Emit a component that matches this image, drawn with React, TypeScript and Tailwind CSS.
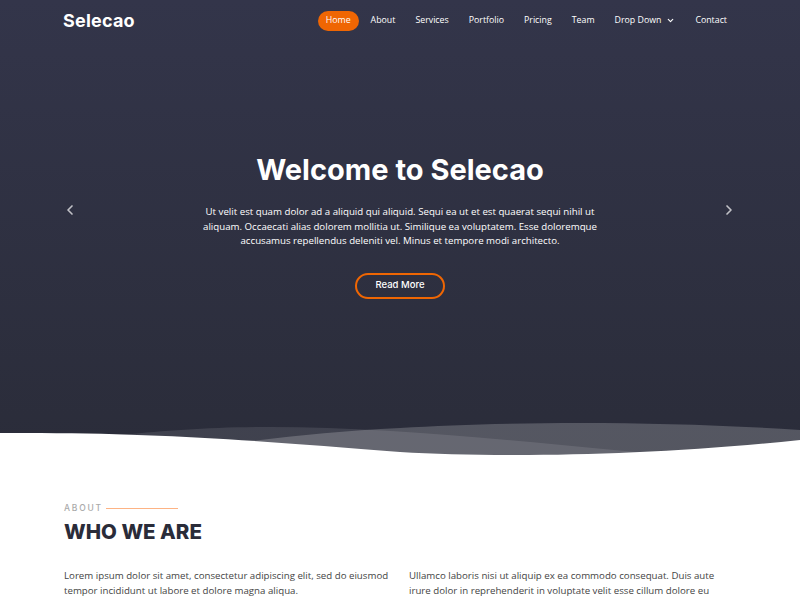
import { ChevronDown, ChevronLeft, ChevronRight } from "lucide-react"

const navItems = ["Home", "About", "Services", "Portfolio", "Pricing", "Team", "Drop Down", "Contact"]

const Header = () => (
  <header className="h-[41px] flex items-center justify-between px-[63px]">
    <h1 className="text-white font-['Inter',sans-serif] font-bold text-[18px] tracking-[0.2px]">Selecao</h1>
    <nav className="flex items-center gap-[4px] font-['Open_Sans',sans-serif] text-[8.8px] text-white mr-[2px]">
      {navItems.map((item) => (
        <a
          key={item}
          href="#"
          className={
            item === "Home"
              ? "bg-[#ef6603] rounded-full px-[8px] h-[20px] flex items-center"
              : "px-[8px] h-[20px] flex items-center gap-[3px]"
          }
        >
          {item}
          {item === "Drop Down" && <ChevronDown size={9} strokeWidth={3} className="ml-[2px]" />}
        </a>
      ))}
    </nav>
  </header>
)

const Waves = () => (
  <svg
    className="absolute left-0 bottom-0 w-full h-[70px]"
    viewBox="0 400 800 70"
    preserveAspectRatio="none"
  >
    <path d="M0,445 C100,440 150,428 260,427 C400,426 550,445 720,460 L800,470 L0,470 Z" fill="rgba(255,255,255,0.1)" />
    <path d="M0,465 C150,460 250,435 400,428 C500,422 650,420 800,430 L800,470 L0,470 Z" fill="rgba(255,255,255,0.2)" />
    <path d="M0,433 C150,432 250,440 400,452 C500,458 650,456 800,440 L800,470 L0,470 Z" fill="#ffffff" />
  </svg>
)

export default function App() {
  return (
    <div className="w-[800px] h-[600px] overflow-hidden bg-white">
      <section className="relative h-[470px] bg-gradient-to-t from-[#2a2c39] to-[#33354a]">
        <Header />
        <div className="flex flex-col items-center pt-[111px]">
          <h2 className="text-white font-['Inter',sans-serif] font-bold text-[29px] leading-[36px]">Welcome to Selecao</h2>
          <p className="mt-[17px] w-[400px] text-center text-white font-['Open_Sans',sans-serif] text-[9.7px] leading-[14.5px]">
            Ut velit est quam dolor ad a aliquid qui aliquid. Sequi ea ut et est quaerat sequi nihil ut aliquam. Occaecati alias dolorem mollitia ut. Similique ea voluptatem. Esse doloremque accusamus repellendus deleniti vel. Minus et tempore modi architecto.
          </p>
          <a
            href="#"
            className="mt-[24px] w-[90px] h-[26px] flex items-center justify-center rounded-full border-2 border-[#ef6603] text-white font-['Inter',sans-serif] font-medium text-[9.5px]"
          >
            Read More
          </a>
        </div>
        <ChevronLeft size={16} strokeWidth={2.5} className="absolute left-[62px] top-[202px] text-white/70" />
        <ChevronRight size={16} strokeWidth={2.5} className="absolute left-[721px] top-[202px] text-white/70" />
        <Waves />
      </section>

      <section className="px-[64px] pt-[32px]">
        <div className="flex items-center gap-[3px]">
          <span className="text-[#aaaaaa] font-['Inter',sans-serif] font-medium text-[8.5px] tracking-[1.8px]">ABOUT</span>
          <span className="w-[72px] h-px bg-[#fdb384]" />
        </div>
        <h3 className="mt-[3px] text-[#2a2c39] font-['Inter',sans-serif] font-extrabold text-[20.5px] leading-[28px]">WHO WE ARE</h3>
        <div className="mt-[22px] grid grid-cols-[327px_327px] gap-[18px] font-['Open_Sans',sans-serif] text-[9.7px] leading-[15px] text-[#444444]">
          <p>
            Lorem ipsum dolor sit amet, consectetur adipiscing elit, sed do eiusmod tempor incididunt ut labore et dolore magna aliqua.
          </p>
          <p>
            Ullamco laboris nisi ut aliquip ex ea commodo consequat. Duis aute irure dolor in reprehenderit in voluptate velit esse cillum dolore eu fugiat nulla pariatur.
          </p>
        </div>
      </section>
    </div>
  )
}
